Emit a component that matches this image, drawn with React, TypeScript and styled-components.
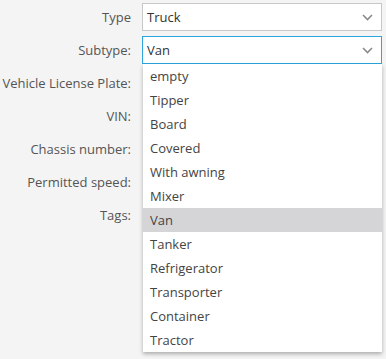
import React from 'react';
import styled, { createGlobalStyle } from 'styled-components';

const GlobalStyle = createGlobalStyle`
  html, body {
    margin: 0;
    padding: 0;
    background: #f4f4f4;
  }
  body {
    font-family: 'Open Sans', 'Liberation Sans', sans-serif;
    font-size: 13px;
    color: #333;
  }
`;

const Form = styled.div`
  display: grid;
  grid-template-columns: 131px 1fr;
  grid-auto-rows: 28px;
  column-gap: 11px;
  row-gap: 5px;
  padding: 3px 4px 0 0;
  width: 386px;
  height: 359px;
  box-sizing: border-box;
`;

const Label = styled.div`
  display: flex;
  align-items: center;
  justify-content: flex-end;
  color: #555;
  white-space: nowrap;
`;

const Field = styled.div`
  position: relative;
`;

const SelectBox = styled.div<{ focused?: boolean }>`
  display: flex;
  align-items: center;
  justify-content: space-between;
  height: 100%;
  box-sizing: border-box;
  padding: 0 8px 0 4px;
  background: #fff;
  border: 1px solid ${({ focused }) => (focused ? '#2ba6de' : '#c8c8c8')};
  color: #333;
`;

const Menu = styled.ul`
  position: absolute;
  top: 100%;
  left: 1px;
  right: 0;
  margin: 0;
  padding: 0;
  list-style: none;
  background: #fff;
  box-shadow: 0 2px 4px rgba(0, 0, 0, 0.3);
  z-index: 2;
`;

const Option = styled.li<{ selected?: boolean }>`
  height: 24px;
  line-height: 24px;
  padding-left: 7px;
  color: #444;
  background: ${({ selected }) => (selected ? '#d5d5d7' : 'transparent')};
`;

function Chevron() {
  return (
    <svg width="11" height="7" viewBox="0 0 11 7">
      <polyline
        points="1,1 5.5,5.5 10,1"
        fill="none"
        stroke="#8a8a8a"
        strokeWidth="1.6"
      />
    </svg>
  );
}

const subtypes = [
  'empty',
  'Tipper',
  'Board',
  'Covered',
  'With awning',
  'Mixer',
  'Van',
  'Tanker',
  'Refrigerator',
  'Transporter',
  'Container',
  'Tractor',
];

const rest = [
  'Vehicle License Plate:',
  'VIN:',
  'Chassis number:',
  'Permitted speed:',
  'Tags:',
];

export default function App() {
  return (
    <>
      <GlobalStyle />
      <Form>
        <Label>Type</Label>
        <Field>
          <SelectBox>
            <span>Truck</span>
            <Chevron />
          </SelectBox>
        </Field>
        <Label>Subtype:</Label>
        <Field>
          <SelectBox focused>
            <span>Van</span>
            <Chevron />
          </SelectBox>
          <Menu>
            {subtypes.map((s) => (
              <Option key={s} selected={s === 'Van'}>
                {s}
              </Option>
            ))}
          </Menu>
        </Field>
        {rest.map((l) => (
          <React.Fragment key={l}>
            <Label>{l}</Label>
            <Field />
          </React.Fragment>
        ))}
      </Form>
    </>
  );
}
